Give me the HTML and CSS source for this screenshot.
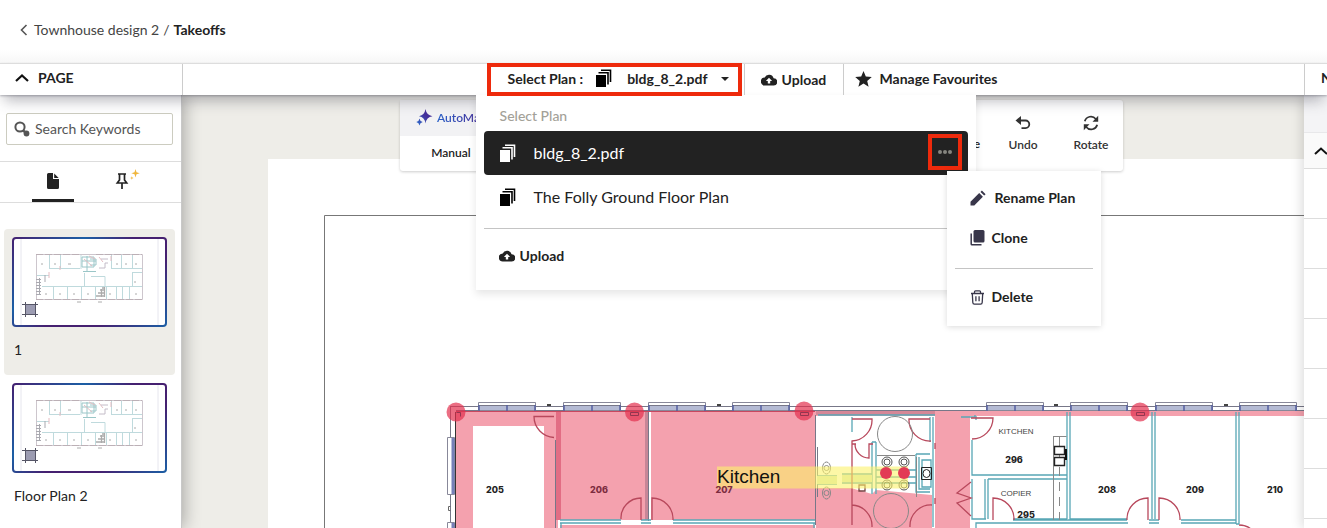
FILE: index.html
```html
<!DOCTYPE html>
<html lang="en">
<head>
<meta charset="utf-8">
<title>Takeoffs</title>
<link rel="stylesheet" href="styles.css">
</head>
<body>
<svg class="defs" aria-hidden="true">
  <defs>
    <symbol id="i-stack" viewBox="0 0 18 19">
      <path d="M1 6h10v12H1z" fill="currentColor"/>
      <path d="M3.500 3.800H13V15.500M6 1.200h9.500V13" fill="none" stroke="currentColor" stroke-width="1.600"/>
    </symbol>
    <symbol id="i-cloud" viewBox="0 0 16 12">
      <path d="M12.600 4.300A4.700 4.700 0 0 0 3.700 3.500 4 4 0 0 0 4 11.500h8.700a3.600 3.600 0 0 0-.1-7.200zM9.200 6.900v2.700H6.800V6.900H4.900L8 3.700l3.100 3.200z" fill="currentColor" fill-rule="evenodd"/>
    </symbol>
    <linearGradient id="g-spark" x1="0" y1="1" x2="1" y2="0">
      <stop offset="0" stop-color="#2a6fd0"/><stop offset=".6" stop-color="#46309a"/>
    </linearGradient>
    <symbol id="thumb-plan" viewBox="0 0 151 86">
      <path d="M7 0v86M144 0v86" stroke="#e6e6ee"/>
      <g fill="none" opacity=".7">
        <path d="M22.500 15.500h106v45h-106z" stroke="#b9aeb8"/>
        <path d="M22 15.500h44M82 15.500h46M22 60.500h106" stroke="#a08f98" stroke-dasharray="7 2"/>
        <path d="M35.500 16v14M46.500 16v13M67 16v14M36 29.500h30M98 29.500h30M97.500 16v14M107.500 16v13M118.500 16v13M23 36.500h12M119 33.500h9M118.500 33v14M28 47.500h100M39.500 48v12M53.500 48v12M67.500 48v12M81.500 48v12M92.500 48v12M102.500 48v12M108.500 48v12M115.500 48v12M70.500 34v13M77 37.500h14v10" stroke="#a5cbd0"/>
        <path d="M68 18h12v10H68zM73 17v15M68 22h14M69 32.500h13M76 20h6v6h-6" stroke="#70aeb0"/>
        <path d="M70 20l8 7M75 17l6 3M35 33v6M46 27v4M85 18l4 5M97 22v-5" stroke="#d8a0a8"/>
        <path d="M85 29h6v-5h3M87 20h7" stroke="#aaa0b0"/>
        <path d="M22 40.500h5M22 43.500h5M22 46.500h5M22 49.500h5M22 52.500h5M22 55.500h5M25.500 39v17M31 36v7" stroke="#858590"/>
        <path d="M82 57h9M84 54h7M86 51h5M88 49h3M87.500 50v8M90.500 48v10" stroke="#888" stroke-width="1.300"/>
        <path d="M27 25h2M40 25h2M54 25h3M102 25h2M111 25h2M121 25h2M31 55h2M45 55h2M59 55h2M73 55h2M95 55h2M121 55h2M120 43h2M63 63h4M84 63h4" stroke="#888"/>
      </g>
      <path d="M11 66h11v10H11z" fill="#9c9cb2"/>
      <path d="M11.500 63v15M21.500 63v15M8 65.500h16M8 75.500h16" stroke="#555566"/>
    </symbol>
  </defs>
</svg>

<div class="app">
  <header class="crumbs">
    <a class="crumb-back" href="#">
      <svg width="8" height="12" viewBox="0 0 8 12" fill="none" stroke="#555" stroke-width="1.600" aria-hidden="true"><path d="M6.500 1 1.500 6l5 5"/></svg>
      Townhouse design 2</a>
    <span>/</span>
    <strong>Takeoffs</strong>
  </header>

  <nav class="bar">
    <button class="bar-page" type="button">
      <svg width="14" height="8" viewBox="0 0 14 8" fill="none" stroke="#111" stroke-width="2.200" aria-hidden="true"><path d="M1 7 7 1.500 13 7"/></svg>
      PAGE
    </button>
    <div class="bar-mid">
      <div class="plan">
        <button class="plan-btn" type="button" aria-expanded="true">
          <span>Select Plan :</span>
          <svg class="stack" aria-hidden="true"><use href="#i-stack"/></svg>
          <span class="plan-name">bldg_8_2.pdf</span>
          <svg width="8" height="4" viewBox="0 0 8 4" aria-hidden="true"><path d="M0 0h8L4 4z" fill="#222"/></svg>
        </button>
        <div class="menu">
          <h2>Select Plan</h2>
          <div class="menu-row active">
            <button class="row-main" type="button"><svg class="stack" aria-hidden="true"><use href="#i-stack"/></svg>bldg_8_2.pdf</button>
            <button class="more" type="button" aria-label="More">
              <svg width="14" height="4" viewBox="0 0 14 4" fill="#85857f" aria-hidden="true"><circle cx="2" cy="2" r="2"/><circle cx="7" cy="2" r="2"/><circle cx="12" cy="2" r="2"/></svg>
            </button>
            <div class="context">
              <button type="button" class="wide">
                <svg width="16" height="16" viewBox="0 0 16 16" fill="#38364a" aria-hidden="true"><path d="M.5 15.500v-3.800l8.700-8.600 3.700 3.700-8.600 8.700zM10.500 1.900l1.400-1.500 3.700 3.800-1.400 1.400z"/></svg>
                Rename Plan</button>
              <button type="button">
                <svg width="15" height="16" viewBox="0 0 15 16" aria-hidden="true"><rect x="3.500" y="0" width="11" height="12.500" rx="1.500" fill="#38364a"/><path d="M1.200 3.500v10.500q0 .8.800.8h9.500" fill="none" stroke="#38364a" stroke-width="1.500"/></svg>
                Clone</button>
              <hr>
              <button type="button">
                <svg width="15" height="15" viewBox="0 0 15 15" fill="none" stroke="#38364a" stroke-width="1.300" aria-hidden="true"><path d="M1 3.500h13M4.500 3.500V1.800q0-1 1-1h4q1 0 1 1v1.700M2.300 3.500l.5 9q.1 1.600 1.600 1.600h6.200q1.500 0 1.600-1.600l.5-9M5.900 6.300v5M9.100 6.300v5"/></svg>
                Delete</button>
            </div>
          </div>
          <div class="menu-row">
            <button class="row-main" type="button"><svg class="stack" aria-hidden="true"><use href="#i-stack"/></svg>The Folly Ground Floor Plan</button>
          </div>
          <hr>
          <button class="menu-upload" type="button"><svg class="cloud" aria-hidden="true"><use href="#i-cloud"/></svg>Upload</button>
        </div>
      </div>
      <button class="bar-btn upload" type="button"><svg class="cloud" aria-hidden="true"><use href="#i-cloud"/></svg>Upload</button>
      <button class="bar-btn fav" type="button">
        <svg width="17" height="16" viewBox="0 0 17 16" fill="#222" aria-hidden="true"><path d="M8.500 0l2.300 5.500 6 .5-4.600 3.900 1.400 5.900-5.100-3.200-5.100 3.200 1.400-5.900L.2 6l6-.5z"/></svg>
        Manage Favourites</button>
    </div>
    <div class="bar-right">N</div>
  </nav>

  <main class="work">
    <aside class="side">
      <div class="search">
        <svg width="16" height="16" viewBox="0 0 16 16" aria-hidden="true"><circle cx="6" cy="6" r="4.600" fill="none" stroke="#555" stroke-width="2"/><path d="M9 9.500l2 1.500" stroke="#555" stroke-width="2.500"/><circle cx="12.500" cy="12.500" r="2.900" fill="#555"/></svg>
        <input type="text" placeholder="Search Keywords" aria-label="Search Keywords">
      </div>
      <div class="tabs">
        <button class="tab on" type="button" aria-label="Pages">
          <svg width="12" height="16" viewBox="0 0 12 16" fill="#222" aria-hidden="true"><path d="M1.500 0H6v6h6v8.500q0 1.500-1.500 1.500h-9Q0 16 0 14.500v-13Q0 0 1.500 0z"/><path d="M7.200.5 11.700 5H7.200z"/></svg>
        </button>
        <button class="tab" type="button" aria-label="Pins">
          <svg width="25" height="22" viewBox="0 0 25 22" aria-hidden="true"><path d="M3 6h8M4.500 6v6L2.300 15h9.400L9.500 12V6M7 15v6" fill="none" stroke="#222" stroke-width="1.700"/><path d="M20.500 1l1 3.200 3.300 1-3.300 1-1 3.200-1-3.200-3.200-1 3.200-1zM16.800 8.200l.5 1.300 1.300.4-1.300.5-.5 1.300-.4-1.300-1.300-.5 1.300-.4z" fill="#f0b63c"/></svg>
        </button>
      </div>
      <div class="pages">
        <button class="page on" type="button"><span class="thumb"><svg viewBox="0 0 151 86" aria-hidden="true"><use href="#thumb-plan"/></svg></span>1</button>
        <button class="page" type="button"><span class="thumb"><svg viewBox="0 0 151 86" aria-hidden="true"><use href="#thumb-plan"/></svg></span>Floor Plan 2</button>
      </div>
    </aside>

    <section class="stage">
      <svg class="drawing" viewBox="182 95 1122 433" preserveAspectRatio="xMidYMin slice" role="img" aria-label="Floor plan">
        <defs>
          <symbol id="win" viewBox="0 0 58 9" overflow="visible">
            <path d="M.5.5h57v8H.5z" fill="#fff" stroke="#889"/>
            <path d="M1 4h56v4H1z" fill="#b4bad4"/><path d="M0 3.500h58" stroke="#778"/>
            <path d="M1 3v6M29 3v6M57 3v6" stroke="#5660a0" stroke-width="1.500"/>
          </symbol>
        </defs>
        <path d="M268 159h1500v900H268z" fill="#fff"/>
        <path d="M324.500 900V215.500H1800" fill="none" stroke="#777"/>

        <g fill="#f4a1ae">
          <path d="M456 411h102v200H456zM473 426v200h71V426z" fill-rule="evenodd"/>
          <path d="M558 411h87v109h-87zM651 411h165v109H651zM560 525h255v80H560z"/>
          <path d="M816 411h488v5H816zM935 415h35v200h-35z"/>
          <path d="M816 488h35l21 6 4-4 56 5v115H816z"/>
        </g>
        <path d="M816 411h119v4H816z" fill="#d58797"/>
        <path d="M645 411h3v109h-3z" fill="#c78697"/>
        <path d="M556 411h5v109h-5z" fill="#dd6079" opacity=".8"/>

        <g fill="none" stroke="#778">
          <path d="M450 406.500h854M816 410.500h488M456 410.500h360M450.500 406v150"/>
          <path d="M555.500 440v100M648.500 411v110M815.500 415v110M817.500 447v50"/>
          <path d="M455.500 412v130" stroke="#333"/>
        </g>
        <path d="M456 411.500h359" stroke="#c9485f"/>
        <g>
          <use href="#win" x="478" y="402" width="58" height="9"/><use href="#win" x="563" y="402" width="58" height="9"/>
          <use href="#win" x="648" y="402" width="58" height="9"/><use href="#win" x="732" y="402" width="58" height="9"/>
          <use href="#win" x="986" y="402" width="58" height="9"/><use href="#win" x="1070" y="402" width="58" height="9"/>
          <use href="#win" x="1155" y="402" width="58" height="9"/><use href="#win" x="1239" y="402" width="58" height="9"/>
        </g>
        <path d="M447.500 437.500h7v57h-7zM447.500 522.500h7v57h-7z" fill="#fff" stroke="#889"/>
        <path d="M453 438v56M453 523v10" stroke="#7680b8" stroke-width="3"/>
        <path d="M450.500 506.500h-2v4h2" fill="none" stroke="#666"/>
        <path d="M547 405h4M717 405h4M1054 405h4M1224 405h4" stroke="#444" stroke-width="2"/>

        <g fill="none" stroke="#58a7b5" stroke-width="1.300">
          <path d="M560 520h61M560 523h61M641 520h10M641 523h10M673 520h142M673 523h142M814 523v80"/>
          <path d="M561 523v30" />
          <path d="M818 415h117M852 417v15M872 442v52M876 442v52M872 442h4M933 417v110M930 417v25"/>
          <path d="M817 476h20M817 484h20M842 474h30M842 483h30M876 470h40M876 477h40M916 454h14M916 454v38h14M919 457v32h11M922 460h9v27h-9zM876 483h40"/>
          <path d="M972 440v35h95M972 479v40h14M976 416v4M1067 412v107M1070 412v107h57M988 479h79M988 479v40M985 479v40M1013 520h114M1013 519h54M976 528v-5h152"/>
          <path d="M1152 412v107M1155 412v107M1149 520h10M1149 523h10M1181 520h55M1181 523h55M1236 412v112M1239 412v112M1236 524h3M961 417h14v-2"/>
        </g>
        <path d="M817 476h20v8h-20zM842 475h30v7h-30z" fill="#dcecc0"/>

        <g fill="none" stroke="#b8485c" stroke-width="1.300">
          <path d="M554 416.500h-20a21 21 0 0 0 20 21M621 519a20 20 0 0 1 20-21v22M652 520v-22a21 21 0 0 1 21 22"/>
          <path d="M852 419h20a21 21 0 0 1-20 22V525M852 444h4M855 444a14 14 0 0 0 14 14v-14h4M930 419h-21a21 21 0 0 0 22 22M852 505a21 21 0 0 1 20 22M932 505a21 21 0 0 0-22 22M935 443v6M935 498v6"/>
          <path d="M971 418h22a21 21 0 0 1-21 21M971 482l-14 11 14 5-14 5 14 13M993 520v-22a21 21 0 0 1 21 22M1127 520a21 21 0 0 1 21-22v22M1159 520v-22a21 21 0 0 1 21 22M1239 525q7 0 12 4"/>
          <path d="M859 485h6v6h-6z" stroke="#744"/>
        </g>
        <g fill="none" stroke="#888">
          <circle cx="895" cy="434" r="17.500"/><circle cx="891" cy="511" r="17.500"/>
          <path d="M877 455.500h38M916.500 457v40"/>
          <ellipse cx="826.500" cy="468" rx="4" ry="6"/><circle cx="826.500" cy="468" r="2.500"/>
          <ellipse cx="826.500" cy="493" rx="4" ry="6"/><circle cx="826.500" cy="493" r="2.500"/>
          <g stroke="#555"><circle cx="887" cy="462" r="5"/><circle cx="904" cy="462" r="5"/><circle cx="887" cy="485" r="5"/><circle cx="904" cy="485" r="5"/><circle cx="887" cy="462" r="3"/><circle cx="904" cy="462" r="3"/><circle cx="887" cy="485" r="3"/><circle cx="904" cy="485" r="3"/></g>
          <path d="M921.500 467.500h10v12h-10z" stroke="#222"/><ellipse cx="926.500" cy="473.500" rx="3.500" ry="4" stroke="#222"/>
          <path d="M1053.500 436.500h13M1053.500 436v84"/><path d="M1059.500 437v83" stroke-dasharray="9 6"/>
          <path d="M1054.500 446.500h10v8h-10zM1054.500 457.500h10v8h-10z" stroke="#222" stroke-width="1.400" fill="#fff"/><path d="M1066 449v11" stroke="#111" stroke-width="2"/>
        </g>

        <path d="M717 466.500h191v22H717z" fill="#fbf26a" opacity=".6"/>
        <g fill="#e2304f" opacity=".7">
          <circle cx="456" cy="412" r="9.500"/><circle cx="634.500" cy="412" r="9.500"/><circle cx="804" cy="411" r="9.500"/><circle cx="1140" cy="412" r="9.500"/>
        </g>
        <g fill="none" stroke="#933650"><path d="M456.500 412.500h4v4M630.500 412.500h8v3h-8zM800.500 412.500h8v3h-8zM1136.500 412.500h8v3h-8z"/></g>
        <circle cx="886" cy="473" r="6" fill="#e23b55"/><circle cx="904" cy="473" r="6" fill="#e23b55"/>

        <g class="room-no">
          <text x="495" y="493">205</text><text class="tint" x="599" y="493">206</text><text class="tint" x="724" y="493">207</text>
          <text x="1014" y="463">296</text><text x="1026" y="518">295</text><text x="1107" y="493">208</text><text x="1195" y="493">209</text><text x="1275" y="493">210</text>
        </g>
        <g class="room-name"><text x="1016" y="434">KITCHEN</text><text x="1016" y="496">COPIER</text></g>
        <text class="note" x="717" y="483">Kitchen</text>
      </svg>

      <div class="tools">
        <div class="modes">
          <button class="mode auto" type="button">
            <svg width="17" height="17" viewBox="0 0 17 17" fill="url(#g-spark)" aria-hidden="true"><path d="M9.500 0q.8 6 7 7.200-6.200 1-7 7.200-.8-6.200-6.500-7.200Q8.700 6 9.500 0zM3.500 9.500q.4 3 3.200 3.500-2.800.5-3.200 3.500Q3.100 13.500.3 13q2.800-.5 3.200-3.500z"/></svg>
            <span>AutoMa</span></button>
          <button class="mode" type="button">Manual</button>
        </div>
        <div class="actions">
          <span class="hidden-tool">e</span>
          <button class="tool" type="button">
            <svg width="16" height="16" viewBox="0 0 16 16" aria-hidden="true"><path d="M5 5.500h5.500a3.800 3.800 0 0 1 0 7.600H6.500" fill="none" stroke="#333" stroke-width="1.800"/><path d="M.5 5.500 6 1v9z" fill="#333"/></svg>
            Undo</button>
          <button class="tool" type="button">
            <svg width="16" height="16" viewBox="0 0 16 16" aria-hidden="true"><path d="M1.800 6.300A6.300 6.300 0 0 1 12.800 4M14.200 9.700A6.300 6.300 0 0 1 3.200 12" fill="none" stroke="#333" stroke-width="1.700"/><path d="M15.200.8v6H9.500zM.8 15.200v-6h5.700z" fill="#333"/></svg>
            Rotate</button>
        </div>
      </div>
    </section>

    <aside class="right">
      <div class="right-top"></div>
      <button class="right-toggle" type="button" aria-label="Collapse">
        <svg width="14" height="8" viewBox="0 0 14 8" fill="none" stroke="#111" stroke-width="2" aria-hidden="true"><path d="M1 7 7 1.500 13 7"/></svg>
      </button>
      <div class="right-row"></div><div class="right-row"></div><div class="right-row"></div><div class="right-row"></div><div class="right-row"></div><div class="right-row"></div><div class="right-row"></div>
    </aside>
  </main>
</div>
</body>
</html>
```
FILE: styles.css
```css
* { box-sizing: border-box; }
body {
  margin: 0;
  color: #222;
  background: #fff;
  font: 400 14px/20px Lato, "Noto Sans", sans-serif;
  overflow: hidden;
}
button {
  padding: 0;
  border: 0;
  background: none;
  color: inherit;
  font: inherit;
  text-align: left;
}
svg { flex: none; display: block; }
hr { border: 0; border-top: 1px solid #c4c4c4; margin: 0; }
.defs { position: absolute; width: 0; height: 0; }
.stack { width: 18px; height: 19px; color: #000; }
.cloud { width: 16px; height: 12px; color: #222; }

.app { display: flex; flex-direction: column; height: 100vh; }

.crumbs {
  display: flex;
  flex: none;
  align-items: center;
  gap: 4px;
  height: 63px;
  padding: 0 20px 3px;
  color: #444;
  background: linear-gradient(#fff 50px, #f7f7f7);
}
.crumb-back { display: flex; align-items: center; gap: 6px; color: inherit; text-decoration: none; }
.crumbs strong { color: #222; font-weight: 700; }

.bar {
  position: relative;
  z-index: 2;
  display: flex;
  flex: none;
  height: 32px;
  border-top: 1px solid #ddd;
  background: #fff;
  box-shadow: 0 10px 14px -4px rgba(60, 60, 75, .35), 0 1px 2px rgba(60, 60, 75, .35);
  font-weight: 700;
}
.bar-page {
  display: flex;
  flex: none;
  align-items: center;
  gap: 9px;
  width: 183px;
  padding-left: 15px;
  padding-bottom: 3px;
  border-right: 1px solid #ccc;
}
.bar-mid { display: flex; flex: 1; justify-content: center; padding-right: 2px; }
.bar-right {
  flex: none;
  width: 23px;
  padding: 4px 0 0 16px;
  border-left: 1px solid #ccc;
  overflow: hidden;
}
.plan { position: relative; width: 256px; }
.plan-btn {
  display: flex;
  align-items: center;
  width: 253px;
  height: 31px;
  padding: 0 12px 2px 20px;
  outline: 4px solid #ee2a0c;
  outline-offset: -3px;
}
.plan-btn .stack { margin: 0 14px 0 12px; }
.plan-name { flex: 1; }
.bar-btn { display: flex; align-items: center; border-left: 1px solid #ccc; }
.upload { gap: 5px; width: 99px; padding-left: 16px; }
.fav { gap: 8px; padding-left: 11px; padding-bottom: 2px; }

.menu {
  position: absolute;
  top: 31px;
  left: -12px;
  width: 500px;
  padding: 11px 8px 24px;
  background: #fff;
  box-shadow: 0 4px 8px rgba(0, 0, 0, .1);
  z-index: -1;
}
.menu h2 { margin: 0 0 5px 16px; color: #a3a198; font-size: 14px; font-weight: 500; line-height: 20px; }
.menu-row { position: relative; display: flex; height: 44px; border-radius: 4px; font-size: 16px; font-weight: 400; }
.row-main { display: flex; flex: 1; align-items: center; gap: 17px; padding-left: 15px; }
.active { background: #222; color: #fff; }
.active .stack { color: #fff; }
.more {
  display: flex;
  align-items: center;
  justify-content: center;
  width: 34px;
  margin: 3px 6px 5px 0;
  border: 4px solid #ee2a0c;
}
.menu > hr { margin-top: 9px; }
.menu-upload { display: flex; align-items: center; gap: 5px; margin: 17px 0 0 15px; font-weight: 700; }

.context {
  position: absolute;
  top: 40px;
  left: 463px;
  z-index: 1;
  width: 154px;
  padding: 7px 8px 9px;
  background: #fff;
  color: #222;
  box-shadow: 0 1px 6px rgba(0, 0, 0, .15);
  font-size: 14px;
  font-weight: 700;
}
.context button { display: flex; align-items: center; gap: 7px; width: 100%; height: 40px; padding-left: 15px; }
.context .wide { gap: 9px; }
.context hr { margin: 10px 0 8px; }

.work { display: flex; flex: 1; min-height: 0; background: #eeede8; }

.side { position: relative; z-index: 1; flex: none; width: 182px; background: #fff; border-right: 1px solid #c8c8c8; box-shadow: 2px 0 16px rgba(0, 0, 0, .3); }
.search {
  display: flex;
  align-items: center;
  gap: 5px;
  height: 32px;
  margin: 18px 8px 16px 6px;
  padding-left: 7px;
  border: 1px solid #ccccc0;
  border-radius: 2px;
}
.search input { flex: 1; min-width: 0; padding: 0; border: 0; outline: 0; background: none; font: inherit; }
.search input::placeholder { color: #555; opacity: 1; }
.tabs { display: flex; gap: 26px; height: 42px; padding-left: 32px; border: solid #ddd; border-width: 1px 0; }
.tab { display: flex; align-items: center; justify-content: center; width: 42px; border-bottom: 3px solid transparent; }
.tab + .tab { align-items: flex-start; padding: 6px 0 0 12px; }
.tab.on { border-color: #222; }
.pages { padding: 26px 6px 0 4px; }
.page { display: flex; flex-direction: column; width: 100%; padding: 8px 8px 15px; gap: 13px; border-radius: 4px; text-indent: 2px; }
.page.on { background: #eeede8; }
.thumb {
  width: 100%;
  border: 2px solid transparent;
  border-radius: 4px;
  background: linear-gradient(#fff, #fff) padding-box, linear-gradient(135deg, #452070, #1b5fa5 30%, #452070 50%, #452070 72%, #1b5fa5) border-box;
}

.stage { position: relative; flex: 1; min-width: 0; overflow: hidden; }
.drawing { width: 100%; height: 100%; }
.room-no { font: 800 9px Inter, sans-serif; fill: #222; text-anchor: middle; }
.room-no .tint { fill: #7c2c40; }
.room-name { font: 400 8px "Liberation Sans", sans-serif; text-anchor: middle; fill: #444; }
.note { font: 400 19px "Liberation Sans", sans-serif; fill: #111; }

.tools {
  position: absolute;
  top: 5px;
  left: 218px;
  right: 181px;
  display: flex;
  justify-content: space-between;
  height: 71px;
  background: #fff;
  border-radius: 3px;
  box-shadow: 0 1px 3px rgba(0, 0, 0, .2);
  font-size: 12px;
  font-weight: 600;
}
.modes { display: flex; flex-direction: column; width: 102px; }
.mode { flex: 1; text-align: center; }
.auto { display: flex; align-items: center; gap: 4px; padding-left: 16px; background: #f2f2f4; }
.auto span { background: linear-gradient(90deg, #2c62c8, #46309a); background-clip: text; color: transparent; }
.actions { display: flex; }
.hidden-tool { align-self: center; padding: 17px 7px 0 0; }
.tool { display: flex; flex-direction: column; align-items: center; justify-content: center; gap: 4px; width: 68px; padding: 0 0 2px 4px; color: #333; }

.right { position: relative; flex: none; width: 23px; background: #fff; box-shadow: -2px 0 12px rgba(0, 0, 0, .15); }
.right-top { height: 38px; background: #f4f4f6; border-bottom: 1px solid #e8e8ea; }
.right-toggle { display: flex; align-items: center; width: 100%; height: 36px; padding-left: 10px; border-bottom: 1px solid #ddd; background: #fafafa; overflow: hidden; }
.right-row { height: 50px; border-bottom: 1px solid #ddd; }
```
